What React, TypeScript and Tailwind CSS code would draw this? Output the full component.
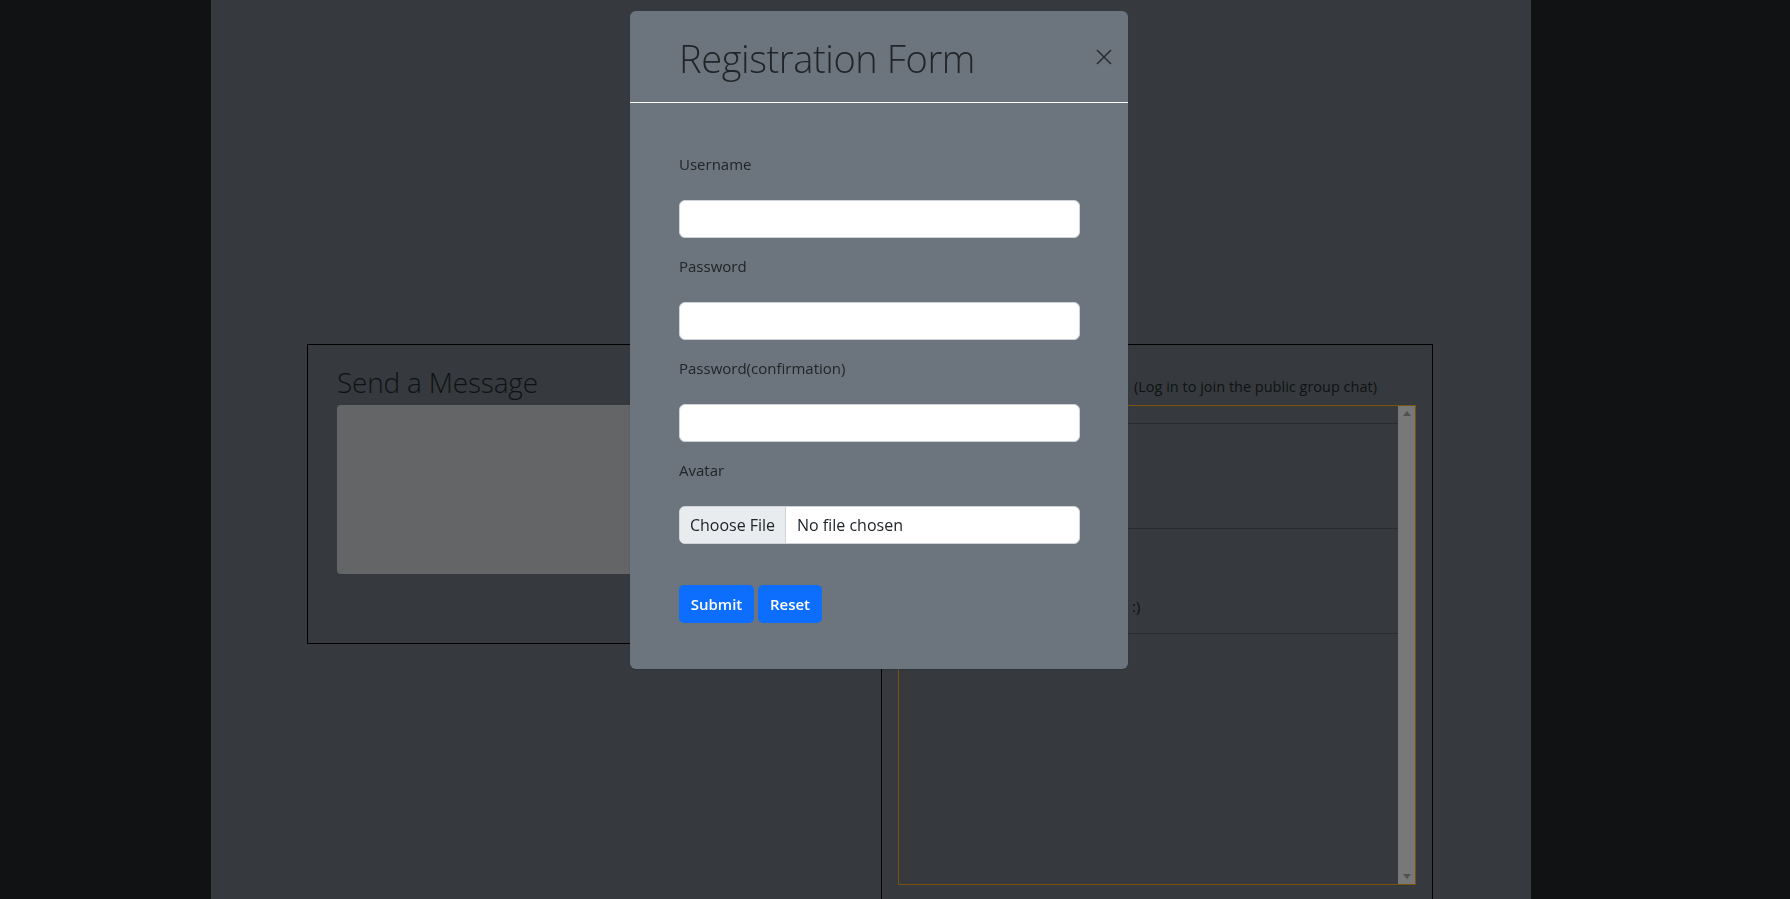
import React from 'react';

const Field: React.FC<{ label: string; first?: boolean; children?: React.ReactNode }> = ({ label, first, children }) => {
    return (
        <div className={first ? '' : 'mt-[16px]'}>
            <label className="block text-[15px] leading-[24px] mb-[24px] text-[#212529]">{label}</label>
            {children ?? <input type="text" className="block w-full h-[38px] rounded-[6px] border border-[#ced4da] bg-white px-3 outline-none" />}
        </div>
    )
}

const RegistrationModal: React.FC = () => {
    return (
        <div className="fixed inset-0 z-50 bg-black/50">
            <div className="absolute left-[630px] top-[11px] w-[498px] h-[658px] rounded-[6px] bg-[#6c757d] shadow">
                <div className="flex items-center justify-between h-[92px] border-b border-white pl-[49px] pr-[12px]">
                    <h1 className="text-[38px] font-light leading-none tracking-[-0.4px] text-[#212529] pt-[3px]">Registration Form</h1>
                    <button type="button" className="w-[24px] h-[24px] flex items-center justify-center opacity-60">
                        <svg width="16" height="16" viewBox="0 0 16 16">
                            <path d="M1 1L15 15M15 1L1 15" stroke="#000" strokeWidth="1.6" />
                        </svg>
                    </button>
                </div>

                <form className="pl-[49px] pr-[48px] pt-[49px]">
                    <Field label="Username" first />
                    <Field label="Password" />
                    <Field label="Password(confirmation)" />
                    <Field label="Avatar">
                        <div className="flex h-[38px] rounded-[6px] border border-[#ced4da] bg-white overflow-hidden text-[16px] text-[#212529]">
                            <div className="w-[106px] shrink-0 flex items-center justify-center bg-[#e9ecef] border-r border-[#ced4da]">Choose File</div>
                            <div className="flex items-center pl-[11px]">No file chosen</div>
                        </div>
                    </Field>
                    <div className="flex gap-[4px] mt-[41px]">
                        <button type="submit" className="h-[38px] w-[75px] rounded-[5px] bg-[#0d6efd] text-white text-[15px] font-semibold">Submit</button>
                        <button type="reset" className="h-[38px] w-[64px] rounded-[5px] bg-[#0d6efd] text-white text-[15px] font-semibold">Reset</button>
                    </div>
                </form>
            </div>
        </div>
    )
}

export default function App() {
    return (
        <div className="relative min-h-[899px] overflow-hidden bg-[#212529] text-[#212529] font-['Open_Sans',sans-serif]">
            <div className="ml-[211px] w-[1320px] min-h-[899px] bg-[#6c757d] pl-[96px] pr-[98px] pt-[344px]">
                <div className="flex gap-[22px] items-start">
                    {/* left: message composer */}
                    <section className="w-[552px] h-[300px] border border-black px-[29px]">
                        <h2 className="h-[60px] flex items-center pt-[14px] text-[28px] font-light leading-none tracking-[-0.2px]">Send a Message</h2>
                        <div className="h-[169px] rounded-[4px] bg-[#c9cacc]" />
                    </section>

                    {/* right: group chat */}
                    <section className="w-[552px] h-[600px] border border-black px-[16px]">
                        <div className="h-[52px] flex items-end">
                            <h3 className="w-[236px] text-[28px] font-light leading-none pb-[2px]">Group Chat</h3>
                            <span className="text-[14.5px] leading-[21px]">(Log in to join the public group chat)</span>
                        </div>
                        <div className="mt-[8px] flex h-[480px] border border-[#f5a413]">
                            <div className="flex-1">
                                <div className="h-[18px] border-b border-[#54595f]" />
                                <div className="h-[105px] border-b border-[#54595f]" />
                                <div className="h-[105px] border-b border-[#54595f]">
                                    <p className="pl-[233px] pt-[66px] text-[15px] leading-[22px]">:)</p>
                                </div>
                            </div>
                            <div className="w-[17px] bg-[#f1f1f1] flex flex-col items-center justify-between py-[5px]">
                                <svg width="8" height="5" viewBox="0 0 8 5"><path d="M4 0L8 5H0Z" fill="#a3a3a3" /></svg>
                                <svg width="8" height="5" viewBox="0 0 8 5"><path d="M0 0H8L4 5Z" fill="#a3a3a3" /></svg>
                            </div>
                        </div>
                    </section>
                </div>
            </div>
            <RegistrationModal />
        </div>
    )
}
